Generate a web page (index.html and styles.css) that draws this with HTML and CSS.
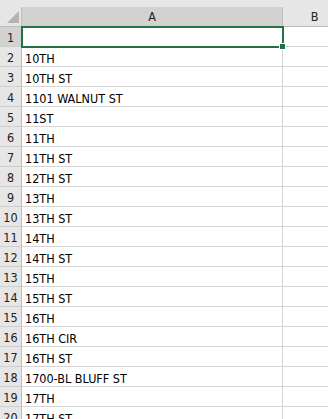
FILE: index.html
```html
<!DOCTYPE html>
<html lang="en">
  <head>
    <meta charset="UTF-8" />
    <title>Sheet1</title>
    <link rel="stylesheet" href="styles.css">
  </head>
  <body>
    <div class="topbar"></div>
    <div class="sheet">
      <div class="corner"><span class="tri"></span></div>
      <div class="colhead active">A</div>
      <div class="colhead">B</div>

      <div class="rowhead active">1</div>
      <div class="cell selected"><span class="handle"></span></div>
      <div class="cell"></div>

      <div class="rowhead">2</div><div class="cell">10TH</div><div class="cell"></div>
      <div class="rowhead">3</div><div class="cell">10TH ST</div><div class="cell"></div>
      <div class="rowhead">4</div><div class="cell">1101 WALNUT ST</div><div class="cell"></div>
      <div class="rowhead">5</div><div class="cell">11ST</div><div class="cell"></div>
      <div class="rowhead">6</div><div class="cell">11TH</div><div class="cell"></div>
      <div class="rowhead">7</div><div class="cell">11TH ST</div><div class="cell"></div>
      <div class="rowhead">8</div><div class="cell">12TH ST</div><div class="cell"></div>
      <div class="rowhead">9</div><div class="cell">13TH</div><div class="cell"></div>
      <div class="rowhead">10</div><div class="cell">13TH ST</div><div class="cell"></div>
      <div class="rowhead">11</div><div class="cell">14TH</div><div class="cell"></div>
      <div class="rowhead">12</div><div class="cell">14TH ST</div><div class="cell"></div>
      <div class="rowhead">13</div><div class="cell">15TH</div><div class="cell"></div>
      <div class="rowhead">14</div><div class="cell">15TH ST</div><div class="cell"></div>
      <div class="rowhead">15</div><div class="cell">16TH</div><div class="cell"></div>
      <div class="rowhead">16</div><div class="cell">16TH CIR</div><div class="cell"></div>
      <div class="rowhead">17</div><div class="cell">16TH ST</div><div class="cell"></div>
      <div class="rowhead">18</div><div class="cell">1700-BL BLUFF ST</div><div class="cell"></div>
      <div class="rowhead">19</div><div class="cell">17TH</div><div class="cell"></div>
      <div class="rowhead">20</div><div class="cell">17TH ST</div><div class="cell"></div>
    </div>
  </body>
</html>
```
FILE: styles.css
```css
body {
  margin: 0;
  background: #fff;
  font-family: "DejaVu Sans Condensed", "DejaVu Sans", sans-serif;
  font-size: 12.5px;
  color: #000;
  overflow: hidden;
}

.topbar {
  height: 7px;
  background: #e6e6e6;
}

.sheet {
  display: grid;
  grid-template-columns: 22px 261px 64px;
  grid-auto-rows: 20px;
  width: 328px;
  overflow: hidden;
}

.sheet > div {
  box-sizing: border-box;
  border-right: 1px solid #d4d4d4;
  border-bottom: 1px solid #d4d4d4;
  white-space: nowrap;
}

.corner {
  position: relative;
  background: #e6e6e6;
  border-right-color: #bdbdbd !important;
  border-bottom-color: #bdbdbd !important;
}

.tri {
  position: absolute;
  right: 2px;
  bottom: 3px;
  width: 0;
  height: 0;
  border-left: 12px solid transparent;
  border-bottom: 12px solid #b4b4b4;
}

.colhead {
  background: #e6e6e6;
  border-right-color: #bdbdbd !important;
  border-bottom-color: #bdbdbd !important;
  text-align: center;
  line-height: 20px;
  color: #222;
}

.rowhead {
  background: #e6e6e6;
  border-right-color: #bdbdbd !important;
  border-bottom-color: #cfcfcf !important;
  text-align: center;
  line-height: 21px;
  color: #222;
}

.colhead.active,
.rowhead.active {
  background: #d2d2d2;
}

.cell {
  padding-left: 3px;
  line-height: 23px;
}

.cell.selected {
  position: relative;
}

.cell.selected::before {
  content: "";
  position: absolute;
  left: -1px;
  top: -1px;
  right: -2px;
  bottom: -2px;
  border: 2px solid #217346;
}

.handle {
  position: absolute;
  right: -4px;
  bottom: -4px;
  width: 5px;
  height: 5px;
  background: #217346;
  border: 1px solid #fff;
  z-index: 2;
}
```
